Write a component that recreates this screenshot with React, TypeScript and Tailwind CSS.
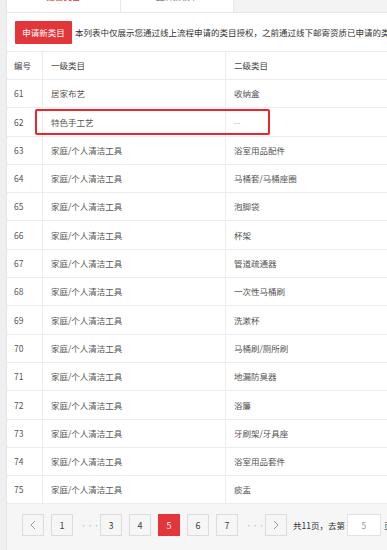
import React from 'react';

const rows: [number, string, string][] = [
  [61, '居家布艺', '收纳盒'],
  [62, '特色手工艺', '--'],
  [63, '家庭/个人清洁工具', '浴室用品配件'],
  [64, '家庭/个人清洁工具', '马桶套/马桶座圈'],
  [65, '家庭/个人清洁工具', '泡脚袋'],
  [66, '家庭/个人清洁工具', '杯架'],
  [67, '家庭/个人清洁工具', '管道疏通器'],
  [68, '家庭/个人清洁工具', '一次性马桶刷'],
  [69, '家庭/个人清洁工具', '洗漱杯'],
  [70, '家庭/个人清洁工具', '马桶刷/厕所刷'],
  [71, '家庭/个人清洁工具', '地漏防臭器'],
  [72, '家庭/个人清洁工具', '浴簾'],
  [73, '家庭/个人清洁工具', '牙刷架/牙具座'],
  [74, '家庭/个人清洁工具', '浴室用品套件'],
  [75, '家庭/个人清洁工具', '痰盂'],
];

const PageBtn: React.FC<{ label: React.ReactNode; active?: boolean }> = ({ label, active }) => (
  <div
    className={
      'w-[22px] h-[22px] shrink-0 flex items-center justify-center border text-[9px] ' +
      (active ? 'bg-[#e2363b] border-[#e2363b] text-white' : 'bg-[#f6f6f6] border-[#dcdcdc] text-[#444]')
    }
  >
    {label}
  </div>
);

const Dots = () => (
  <div className="w-[13px] shrink-0 text-center text-[7px] leading-[22px] text-[#c4c4c4] tracking-[-0.5px]">···</div>
);

const Arrow: React.FC<{ dir: 'l' | 'r' }> = ({ dir }) => (
  <svg width="6" height="10" viewBox="0 0 6 10" fill="none" stroke="#999" strokeWidth="1">
    {dir === 'l' ? <path d="M5 1L1 5l4 4" /> : <path d="M1 1l4 4-4 4" />}
  </svg>
);

export default function App() {
  return (
    <div
      className="w-[387px] h-[550px] overflow-hidden bg-[#efefef] pl-[6px] text-[8.5px] text-[#555]"
      style={{ fontFamily: '"Noto Sans CJK SC", "Noto Sans", sans-serif' }}
    >
      <div className="h-full flex flex-col border-l border-[#e4e4e4] bg-white">
        {/* Tabs (scrolled, mostly out of view) */}
        <div className="flex h-[13px] shrink-0 border-b border-[#e8e8e8] bg-[#f3f3f3]">
          <div className="w-[113px] bg-white flex items-end justify-center overflow-hidden">
            <span className="leading-[9px] mb-[11px] text-[#e2363b]">经营类目</span>
          </div>
          <div className="w-[114px] bg-white border-l border-r border-[#e8e8e8] flex items-end justify-center overflow-hidden">
            <span className="leading-[9px] mb-[11px] text-[#777]">品牌授权书</span>
          </div>
        </div>

        {/* Toolbar */}
        <div className="flex items-center h-[38px] shrink-0 pl-[8px] overflow-hidden">
          <div className="w-[57px] h-[23px] shrink-0 bg-[#e2363b] rounded-[1px] text-white flex items-center justify-center">
            申请新类目
          </div>
          <div className="ml-[3px] whitespace-nowrap text-[#333]">
            本列表中仅展示您通过线上流程申请的类目授权，之前通过线下邮寄资质已申请的类目不在此列表中显示
          </div>
        </div>

        {/* Table */}
        <div className="relative border-t border-[#ececec] shrink-0">
          <div className="grid grid-cols-[36px_183px_1fr] h-[28px] items-center border-b border-[#ececec] text-[#444]">
            <div className="pl-[7px] h-full flex items-center border-r border-[#ececec]">编号</div>
            <div className="pl-[8px] h-full flex items-center border-r border-[#ececec]">一级类目</div>
            <div className="pl-[8px]">二级类目</div>
          </div>
          {rows.map(([n, a, b]) => (
            <div
              key={n}
              className="grid grid-cols-[36px_183px_1fr] h-[28.3px] items-center border-b border-[#ececec]"
            >
              <div className="pl-[7px] h-full flex items-center border-r border-[#ececec]">{n}</div>
              <div className="pl-[8px] h-full flex items-center border-r border-[#ececec]">{a}</div>
              <div className={'pl-[8px] ' + (b === '--' ? 'text-[#aaa]' : '')}>{b}</div>
            </div>
          ))}
          {/* Annotation box */}
          <div className="absolute left-[28px] top-[57px] w-[235px] h-[26px] border-2 border-[#e8262b] rounded-[2px]" />
        </div>

        {/* Pagination */}
        <div className="flex-1 bg-[#f6f6f6] flex items-start pt-[10px] pl-[15px] gap-[7px] whitespace-nowrap overflow-hidden">
          <PageBtn label={<Arrow dir="l" />} />
          <PageBtn label="1" />
          <Dots />
          <PageBtn label="3" />
          <PageBtn label="4" />
          <PageBtn label="5" active />
          <PageBtn label="6" />
          <PageBtn label="7" />
          <Dots />
          <PageBtn label={<Arrow dir="r" />} />
          <div className="flex items-center h-[22px] -ml-[1px] text-[#333] shrink-0">
            共11页，去第
            <div className="ml-[2px] w-[34px] h-[22px] bg-white border border-[#e2e2e2] flex items-center justify-center text-[#999]">
              5
            </div>
            <span className="ml-[3px]">页</span>
          </div>
        </div>
      </div>
    </div>
  );
}
